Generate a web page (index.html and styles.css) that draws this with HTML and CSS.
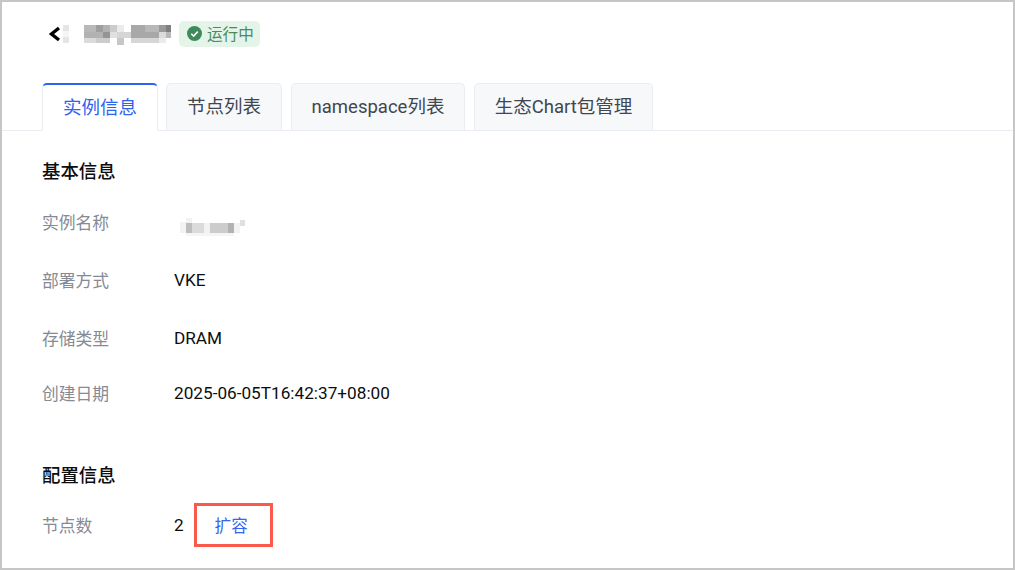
FILE: index.html
```html
<!DOCTYPE html>
<html lang="zh-CN">
<head>
<meta charset="utf-8">
<title>实例详情</title>
<link rel="stylesheet" href="styles.css">
</head>
<body>
<div class="frame">
  <header class="head">
    <svg class="back" width="14" height="16" viewBox="0 0 14 16"><path d="M11 2 L3.5 8 L11 14" fill="none" stroke="#000" stroke-width="3.4"/></svg>
    <svg class="mosaic-title" width="108" height="22" viewBox="0 0 108 22">
      <defs><filter id="soft"><feGaussianBlur stdDeviation="0.6"/></filter></defs>
      <g fill="#000" filter="url(#soft)">
        <rect x="0" y="2" width="6" height="6" opacity=".1"/><rect x="0" y="8" width="6" height="6" opacity=".04"/><rect x="0" y="14" width="6" height="6" opacity=".1"/>
        <g transform="translate(21 0)">
          <rect x="0" y="2" width="12" height="7" opacity=".28"/><rect x="12" y="2" width="7" height="7" opacity=".38"/><rect x="19" y="2" width="7" height="7" opacity=".3"/><rect x="26" y="2" width="7" height="7" opacity=".2"/><rect x="33" y="2" width="7" height="7" opacity=".08"/><rect x="47" y="2" width="14" height="7" opacity=".34"/><rect x="61" y="2" width="14" height="7" opacity=".28"/><rect x="75" y="2" width="7" height="7" opacity=".4"/><rect x="82" y="2" width="6" height="7" opacity=".5"/>
          <rect x="0" y="9" width="19" height="6" opacity=".3"/><rect x="19" y="9" width="7" height="6" opacity=".42"/><rect x="26" y="9" width="7" height="6" opacity=".12"/><rect x="33" y="9" width="14" height="6" opacity=".16"/><rect x="47" y="9" width="28" height="6" opacity=".34"/><rect x="75" y="9" width="7" height="6" opacity=".14"/><rect x="82" y="9" width="6" height="6" opacity=".28"/>
          <rect x="0" y="15" width="12" height="5" opacity=".14"/><rect x="12" y="15" width="14" height="5" opacity=".2"/><rect x="33" y="15" width="7" height="7" opacity=".22"/><rect x="47" y="15" width="28" height="5" opacity=".16"/><rect x="75" y="15" width="7" height="5" opacity=".08"/>
        </g>
      </g>
    </svg>
    <span class="status">
      <svg width="15" height="15" viewBox="0 0 15 15"><circle cx="7.5" cy="7.5" r="7.5" fill="#3f8a5a"/><path d="M4.3 7.7 L6.6 10 L10.8 5.6" fill="none" stroke="#fff" stroke-width="1.6"/></svg>
      运行中
    </span>
  </header>
  <nav class="tabs">
    <a class="tab active">实例信息</a>
    <a class="tab w-node">节点列表</a>
    <a class="tab w-ns">namespace列表</a>
    <a class="tab w-chart">生态Chart包管理</a>
  </nav>
  <main class="content">
    <h2 class="title">基本信息</h2>
    <dl class="info">
      <div class="row r1"><dt>实例名称</dt><dd>
        <svg class="mosaic-name" width="66" height="18" viewBox="0 0 66 18"><g fill="#000" filter="url(#soft)">
          <rect x="0" y="4" width="6" height="11" opacity=".05"/><rect x="6" y="0" width="6" height="5" opacity=".05"/><rect x="6" y="5" width="6" height="10" opacity=".26"/><rect x="12" y="5" width="12" height="10" opacity=".14"/><rect x="24" y="5" width="6" height="10" opacity=".05"/><rect x="30" y="5" width="18" height="10" opacity=".2"/><rect x="48" y="5" width="6" height="10" opacity=".3"/><rect x="54" y="5" width="6" height="10" opacity=".05"/><rect x="60" y="2" width="5" height="6" opacity=".12"/><rect x="6" y="15" width="48" height="3" opacity=".04"/>
        </g></svg>
      </dd></div>
      <div class="row r2"><dt>部署方式</dt><dd>VKE</dd></div>
      <div class="row r3"><dt>存储类型</dt><dd>DRAM</dd></div>
      <div class="row r4"><dt>创建日期</dt><dd>2025-06-05T16:42:37+08:00</dd></div>
    </dl>
    <h2 class="title second">配置信息</h2>
    <dl class="info">
      <div class="row r5"><dt>节点数</dt><dd class="nodes">2<span class="callout"><a class="link">扩容</a></span></dd></div>
    </dl>
  </main>
</div>
</body>
</html>
```

FILE: styles.css
```css
* { box-sizing: border-box; }
html, body { margin: 0; padding: 0; }
body {
  width: 1015px;
  height: 570px;
  overflow: hidden;
  background: #fff;
  font-family: Roboto, "Noto Sans CJK SC", sans-serif;
  color: #0c0d0e;
}
.frame {
  width: 1015px;
  height: 570px;
  border: 2px solid #c6c6c6;
  overflow: hidden;
}
.head {
  display: flex;
  align-items: center;
  height: 81px;
  padding: 0 0 18px 46px;
}
.back { margin-right: 1px; }
.mosaic-title { margin-right: 8px; }
.status {
  display: inline-flex;
  align-items: center;
  gap: 5px;
  height: 26px;
  padding: 0 6px 1px 8px;
  border-radius: 5px;
  background: #e5f4e8;
  color: #4a8a60;
  font-size: 15.6px;
}
.tabs {
  display: flex;
  gap: 8px;
  height: 48px;
  padding-left: 40px;
  border-bottom: 1px solid #eaedf1;
}
.tab {
  display: flex;
  align-items: center;
  justify-content: center;
  height: 47px;
  border: 1px solid #eaedf1;
  border-bottom: 0;
  border-radius: 5px 5px 0 0;
  background: #f6f8fa;
  color: #41464f;
  font-size: 18.5px;
  padding-bottom: 5px;
}
.tab.active {
  width: 116px;
  height: 48px;
  background: #fff;
  color: #2e62f1;
  border-top: 2px solid #2e62f1;
  margin-bottom: -1px;
}
.w-node { width: 116px; }
.w-ns { width: 174px; margin-left: 1px; }
.w-chart { width: 179px; margin-left: 1px; }
.content { padding: 0 40px; }
.title {
  margin: 0;
  padding-top: 28px;
  font-size: 18.4px;
  line-height: 26px;
  font-weight: 500;
  color: #0c0d0e;
}
.title.second { padding-top: 58px; }
.info { margin: 0; }
.row { display: flex; align-items: center; }
.r1 { height: 24px; margin-top: 25px; }
.r2 { height: 24px; margin-top: 34px; }
.r3 { height: 24px; margin-top: 34px; }
.r4 { height: 24px; margin-top: 31px; }
.r5 { height: 24px; margin-top: 24px; }
dt {
  width: 132px;
  font-size: 16.8px;
  color: #858a94;
}
dd {
  margin: 0;
  font-size: 17.2px;
  color: #0c0d0e;
  display: flex;
  align-items: center;
}
.mosaic-name { margin: 9px 0 0 6px; }
.nodes { position: relative; }
.callout {
  display: flex;
  align-items: center;
  justify-content: center;
  width: 79px;
  height: 44px;
  margin-left: 10px;
  border: 3px solid #fa5a4c;
  padding-right: 4px;
}
.link { color: #3565f2; font-size: 16.6px; }
```
